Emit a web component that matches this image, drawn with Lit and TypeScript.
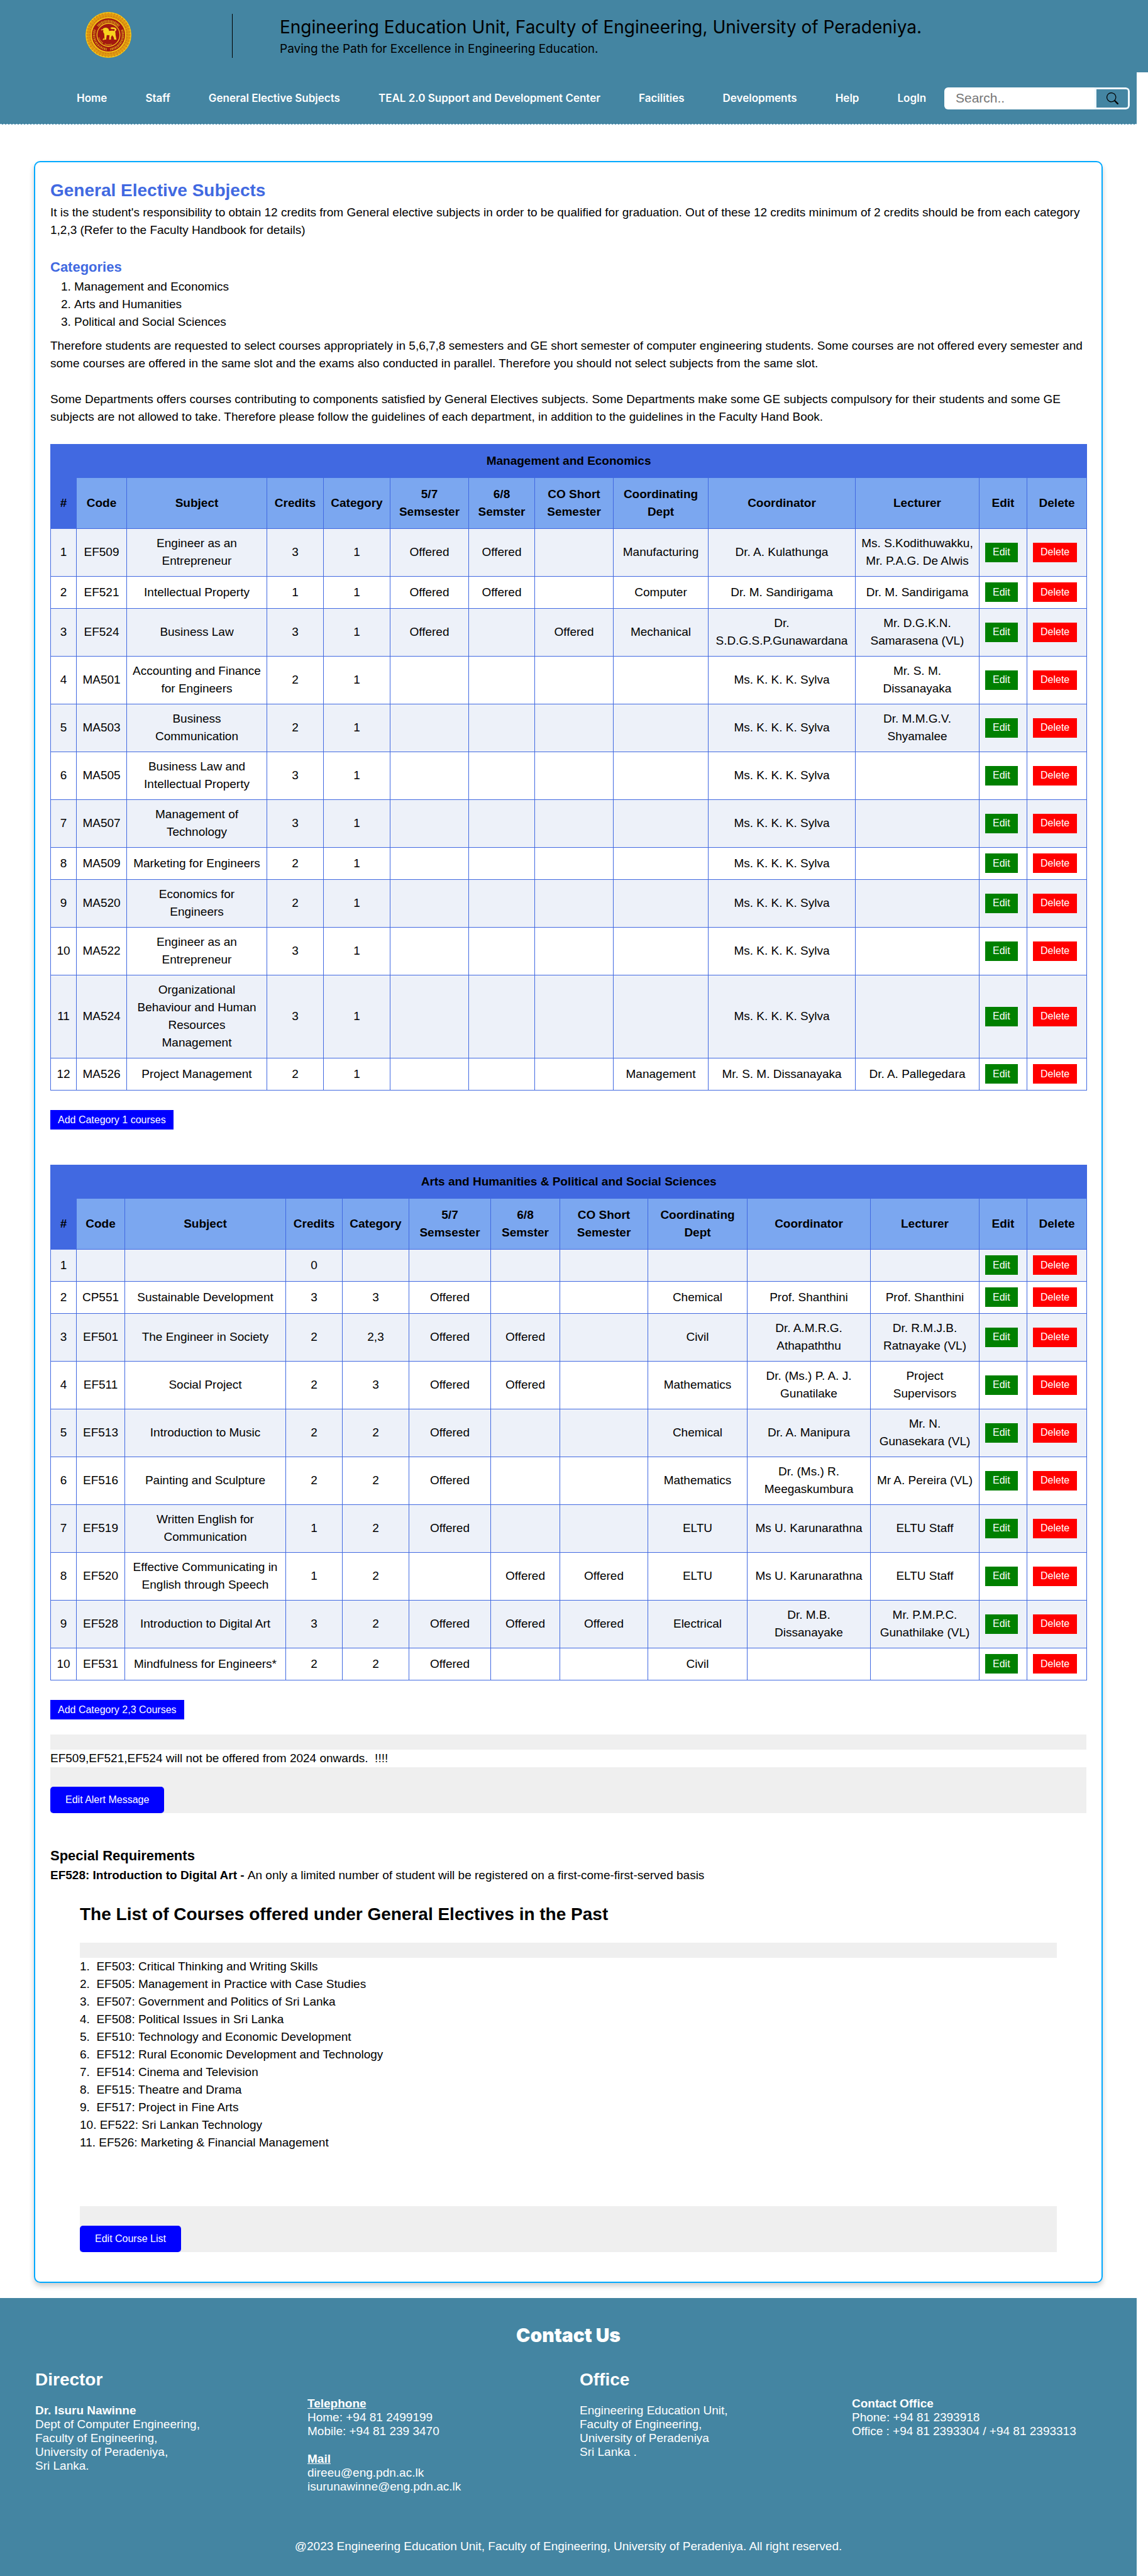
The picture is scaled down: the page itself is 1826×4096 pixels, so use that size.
import { LitElement, html, css, svg, nothing } from "lit";
import { customElement, property } from "lit/decorators.js";

type Course = [
  code: string,
  subject: string,
  credits: string,
  category: string,
  odd: string,
  even: string,
  short: string,
  dept: string,
  coordinator: string,
  lecturer: string,
];

const O = "Offered";
const SYLVA = "Ms. K. K. K. Sylva";

const CATEGORY_1: Course[] = [
  ["EF509", "Engineer as an Entrepreneur", "3", "1", O, O, "", "Manufacturing", "Dr. A. Kulathunga", "Ms. S.Kodithuwakku, Mr. P.A.G. De Alwis"],
  ["EF521", "Intellectual Property", "1", "1", O, O, "", "Computer", "Dr. M. Sandirigama", "Dr. M. Sandirigama"],
  ["EF524", "Business Law", "3", "1", O, "", O, "Mechanical", "Dr. S.D.G.S.P.Gunawardana", "Mr. D.G.K.N. Samarasena (VL)"],
  ["MA501", "Accounting and Finance for Engineers", "2", "1", "", "", "", "", SYLVA, "Mr. S. M. Dissanayaka"],
  ["MA503", "Business Communication", "2", "1", "", "", "", "", SYLVA, "Dr. M.M.G.V. Shyamalee"],
  ["MA505", "Business Law and Intellectual Property", "3", "1", "", "", "", "", SYLVA, ""],
  ["MA507", "Management of Technology", "3", "1", "", "", "", "", SYLVA, ""],
  ["MA509", "Marketing for Engineers", "2", "1", "", "", "", "", SYLVA, ""],
  ["MA520", "Economics for Engineers", "2", "1", "", "", "", "", SYLVA, ""],
  ["MA522", "Engineer as an Entrepreneur", "3", "1", "", "", "", "", SYLVA, ""],
  ["MA524", "Organizational Behaviour and Human Resources Management", "3", "1", "", "", "", "", SYLVA, ""],
  ["MA526", "Project Management", "2", "1", "", "", "", "Management", "Mr. S. M. Dissanayaka", "Dr. A. Pallegedara"],
];

const CATEGORY_2_3: Course[] = [
  ["", "", "0", "", "", "", "", "", "", ""],
  ["CP551", "Sustainable Development", "3", "3", O, "", "", "Chemical", "Prof. Shanthini", "Prof. Shanthini"],
  ["EF501", "The Engineer in Society", "2", "2,3", O, O, "", "Civil", "Dr. A.M.R.G. Athapaththu", "Dr. R.M.J.B. Ratnayake (VL)"],
  ["EF511", "Social Project", "2", "3", O, O, "", "Mathematics", "Dr. (Ms.) P. A. J. Gunatilake", "Project Supervisors"],
  ["EF513", "Introduction to Music", "2", "2", O, "", "", "Chemical", "Dr. A. Manipura", "Mr. N. Gunasekara (VL)"],
  ["EF516", "Painting and Sculpture", "2", "2", O, "", "", "Mathematics", "Dr. (Ms.) R. Meegaskumbura", "Mr A. Pereira (VL)"],
  ["EF519", "Written English for Communication", "1", "2", O, "", "", "ELTU", "Ms U. Karunarathna", "ELTU Staff"],
  ["EF520", "Effective Communicating in English through Speech", "1", "2", "", O, O, "ELTU", "Ms U. Karunarathna", "ELTU Staff"],
  ["EF528", "Introduction to Digital Art", "3", "2", O, O, O, "Electrical", "Dr. M.B. Dissanayake", "Mr. P.M.P.C. Gunathilake (VL)"],
  ["EF531", "Mindfulness for Engineers*", "2", "2", O, "", "", "Civil", "", ""],
];

const HEADINGS = [
  "#", "Code", "Subject", "Credits", "Category", "5/7 Semsester", "6/8 Semster",
  "CO Short Semester", "Coordinating Dept", "Coordinator", "Lecturer", "Edit", "Delete",
];

const PAST_COURSES = [
  "1.\u00a0 EF503: Critical Thinking and Writing Skills",
  "2.\u00a0 EF505: Management in Practice with Case Studies",
  "3.\u00a0 EF507: Government and Politics of Sri Lanka",
  "4.\u00a0 EF508: Political Issues in Sri Lanka",
  "5.\u00a0 EF510: Technology and Economic Development",
  "6.\u00a0 EF512: Rural Economic Development and Technology",
  "7.\u00a0 EF514: Cinema and Television",
  "8.\u00a0 EF515: Theatre and Drama",
  "9.\u00a0 EF517: Project in Fine Arts",
  "10. EF522: Sri Lankan Technology",
  "11. EF526: Marketing & Financial Management",
];

const NAV = [
  "Home", "Staff", "General Elective Subjects", "TEAL 2.0 Support and Development Center",
  "Facilities", "Developments", "Help", "LogIn",
];

@customElement("university-crest")
export class UniversityCrest extends LitElement {
  static styles = css`
    :host { display: block; width: 73px; height: 73px; }
    svg { display: block; width: 100%; height: 100%; }
  `;

  render() {
    const petals = Array.from({ length: 44 }, (_, i) => svg`
      <ellipse cx="50" cy="6" rx="1.5" ry="4" fill="none" stroke="#c8700e" stroke-width="1"
        transform="rotate(${(i * 360) / 44} 50 50)"></ellipse>`);
    return html`
      <svg viewBox="0 0 100 100" role="img" aria-label="University of Peradeniya crest">
        <circle cx="50" cy="50" r="50" fill="#e9a913"></circle>
        <circle cx="50" cy="50" r="48.6" fill="none" stroke="#f6d21c" stroke-width="1.4"></circle>
        ${petals}
        <circle cx="50" cy="50" r="40" fill="none" stroke="#c8700e" stroke-width="2" stroke-dasharray="1.6 1.8"></circle>
        <circle cx="50" cy="50" r="37" fill="#a3180f" stroke="#f6d21c" stroke-width="1.6"></circle>
        <path d="M27 31a30 30 0 0 1 46 0" fill="none" stroke="#d08a17" stroke-width="6" stroke-dasharray="2 1.1 3 1"></path>
        <path d="M20.500 39a31.500 31.500 0 0 0 26 42.300" fill="none" stroke="#d08a17" stroke-width="5" stroke-dasharray="2 1.500 3 1.300"></path>
        <path d="M79.500 39a31.500 31.500 0 0 1 -26 42.300" fill="none" stroke="#d08a17" stroke-width="5" stroke-dasharray="3 1.200 2 1"></path>
        <circle cx="50" cy="50" r="25" fill="#a3180f" stroke="#f3c81c" stroke-width="1.800"></circle>
        <path d="M29 56q3 9 9 12M42 70q8 3 16 0" fill="none" stroke="#d08a17" stroke-width="3" stroke-dasharray="2 1.200"></path>
        <path fill="#f8d31e" d="M37 39c1-4 5-5 9-4.500 4 .5 5 4 5.500 7 3-.6 7-1 10 0 3-1 3-3.500.5-4.500l-5 .2-3-2.200 3-1.800 6 .8c5 1 6 6 1.500 8.800 1.500 4 .5 7 1.500 10l1.500 7.500h-4l-2.500-6-3-3.500-2.500 4.500v5h-4l.8-9.500-6-.5-1.300 10h-5.500l2-2.200-.8-11c-2.500-2-2.500-5-1.700-7.600l-4.500.6-.8-1.500 3-.8-2-1.300z"></path>
        <path fill="#f8d31e" d="M40 56l-3 5h4zM63 54l4 6h-5z"></path>
      </svg>`;
  }
}

@customElement("course-table")
export class CourseTable extends LitElement {
  @property() heading = "";
  @property({ attribute: false }) rows: Course[] = [];
  @property({ attribute: false }) widths: number[] = [];

  static styles = css`
    :host { display: block; }
    table {
      width: 100%;
      table-layout: fixed;
      border-collapse: collapse;
      font: 19px/28px "Liberation Sans", Arial, sans-serif;
      color: #000;
      text-align: center;
    }
    th, td { border: 1px solid #4169e1; vertical-align: middle; }
    th { background: #7ba7f0; padding: 12px 8px; font-weight: bold; }
    .title, .index { background: #4169e1; }
    .index { padding: 12px 2px; }
    td { padding: 9px 8px 10px; }
    .number { padding: 9px 2px 10px; }
    tbody tr:nth-child(odd) { background: #edf1f9; }
    .action { padding: 9px 8px 10px 9px; }
    button {
      display: block;
      height: 31px;
      border: 0;
      padding: 0 12px;
      color: #fff;
      font: 16px "Liberation Sans", Arial, sans-serif;
      cursor: pointer;
    }
    .edit { background: #008000; }
    .delete { background: #ff0000; }
  `;

  render() {
    return html`
      <table>
        <colgroup>
          ${this.widths.map((w) => html`<col style="width:${w}px">`)}
        </colgroup>
        <thead>
          <tr><th class="title" colspan="13">${this.heading}</th></tr>
          <tr>
            ${HEADINGS.map((h, i) => html`<th scope="col" class=${i === 0 ? "index" : nothing}>${h}</th>`)}
          </tr>
        </thead>
        <tbody>
          ${this.rows.map((row, i) => html`
            <tr>
              <td class="number">${i + 1}</td>
              ${row.map((value) => html`<td>${value}</td>`)}
              <td class="action"><button class="edit" type="button">Edit</button></td>
              <td class="action"><button class="delete" type="button">Delete</button></td>
            </tr>`)}
        </tbody>
      </table>`;
  }
}

@customElement("app-root")
export class AppRoot extends LitElement {
  static styles = css`
    :host {
      display: block;
      background: #fff;
      color: #000;
      font: 19px/28px "Liberation Sans", Arial, sans-serif;
    }
    h1, h2, h3, p, ol, ul { margin: 0; padding: 0; }
    h2 { font-size: 28px; line-height: 42px; }
    h3 { font-size: 22px; line-height: 34px; }
    button { border: 0; color: #fff; font: 16px "Liberation Sans", Arial, sans-serif; cursor: pointer; }

    .banner {
      display: flex;
      align-items: flex-start;
      box-sizing: border-box;
      height: 115px;
      padding: 19px 20px 0 136px;
      background: #4485a2;
      font-family: Inter, sans-serif;
    }
    .divider { width: 1px; height: 70px; margin: 3px 75px 0 160px; background: #000; }
    .banner-title { padding-top: 5px; }
    .banner h1 { font-size: 28px; line-height: 38px; font-weight: 400; }
    .banner p { font-size: 19px; line-height: 32px; font-weight: 400; }

    .page { margin-right: 18px; }
    .nav {
      display: flex;
      align-items: center;
      justify-content: space-between;
      height: 82px;
      padding: 0 11px 0 122px;
      background: #4485a2;
      border-bottom: 1px dashed #d4eaf7;
    }
    .nav ul { display: flex; gap: 61px; list-style: none; }
    .nav a {
      color: #fff;
      text-decoration: none;
      font: 600 17px/28px Inter, sans-serif;
      white-space: nowrap;
    }
    .search { display: flex; height: 35px; border-radius: 6px; overflow: hidden; }
    .search input {
      box-sizing: border-box;
      width: 239px;
      border: 0;
      padding: 0 18px;
      background: #fff;
      font: 21px "Liberation Sans", Arial, sans-serif;
    }
    .search input::placeholder { color: #757575; }
    .search button {
      display: flex;
      align-items: center;
      justify-content: center;
      width: 56px;
      padding: 0;
      border: 3px solid #f0f8ff;
      border-radius: 0 6px 6px 0;
      background: #4485a2;
      color: #000;
    }
    .search svg { width: 19px; height: 19px; }

    .card {
      margin: 58px 54px 24px;
      padding: 24px 24px 47px;
      border: 2px solid #00a9ff;
      border-radius: 10px;
      box-shadow: 0 5px 9px rgba(0, 0, 0, 0.2);
    }
    .blue { color: #4169e1; }
    .categories-title { margin-top: 28px; }
    .categories { margin-bottom: 10px; padding-left: 38px; }
    .gap { margin-top: 29px; }
    course-table { margin-top: 29px; }
    .add { display: block; height: 31px; margin: 31px 0 0; padding: 0 12px; background: #0000ff; }
    .second { margin-top: 56px; }
    .panel { background: #efefef; padding-top: 24px; }
    .alert { margin-top: 24px; }
    .panel-text { background: #fff; }
    .panel button {
      display: block;
      height: 42px;
      margin-top: 31px;
      padding: 0 24px;
      border-radius: 5px;
      background: #0000ff;
    }
    .special { margin-top: 51px; }
    .past { padding: 27px 47px 0; }
    .past h2 { margin-bottom: 24px; }
    .past .panel-text { padding-bottom: 87px; list-style: none; }

    footer {
      padding: 43px 20px 36px 56px;
      background: #4485a2;
      color: #fff;
      line-height: 22px;
    }
    .contact { margin-right: -20px; margin-left: -56px; font: 900 30px/32px Inter, sans-serif; text-align: center; }
    .columns {
      display: grid;
      grid-template-columns: repeat(4, 1fr);
      margin-top: 39px;
      min-height: 270px;
    }
    .columns h2 { margin-bottom: 22px; line-height: 32px; }
    .side { padding-top: 43px; }
    .under { text-decoration: underline; }
    .mail { margin-top: 22px; }
    .copyright { margin-right: -20px; margin-left: -56px; text-align: center; }
  `;

  render() {
    return html`
      <header class="banner">
        <university-crest></university-crest>
        <div class="divider"></div>
        <div class="banner-title">
          <h1>Engineering Education Unit, Faculty of Engineering, University of Peradeniya.</h1>
          <p>Paving the Path for Excellence in Engineering Education.</p>
        </div>
      </header>
      <div class="page">
        <nav class="nav">
          <ul>${NAV.map((n) => html`<li><a href="#">${n}</a></li>`)}</ul>
          <form class="search" role="search">
            <input type="text" aria-label="Search" placeholder="Search..">
            <button type="button" aria-label="Submit search">
              <svg viewBox="0 0 16 16" fill="currentColor">
                <path d="M11.742 10.344a6.500 6.500 0 1 0-1.397 1.398h-.001c.03.04.062.078.098.115l3.850 3.850a1 1 0 0 0 1.415-1.414l-3.850-3.850a1.007 1.007 0 0 0-.115-.1zM12 6.500a5.500 5.500 0 1 1-11 0 5.500 5.500 0 0 1 11 0"></path>
              </svg>
            </button>
          </form>
        </nav>

        <main class="card">
          <h2 class="blue">General Elective Subjects</h2>
          <p>It is the student's responsibility to obtain 12 credits from General elective subjects in order to be qualified for graduation. Out of these 12 credits minimum of 2 credits should be from each category 1,2,3 (Refer to the Faculty Handbook for details)</p>
          <h3 class="blue categories-title">Categories</h3>
          <ol class="categories">
            <li>Management and Economics</li>
            <li>Arts and Humanities</li>
            <li>Political and Social Sciences</li>
          </ol>
          <p>Therefore students are requested to select courses appropriately in 5,6,7,8 semesters and GE short semester of computer engineering students. Some courses are not offered every semester and some courses are offered in the same slot and the exams also conducted in parallel. Therefore you should not select subjects from the same slot.</p>
          <p class="gap">Some Departments offers courses contributing to components satisfied by General Electives subjects. Some Departments make some GE subjects compulsory for their students and some GE subjects are not allowed to take. Therefore please follow the guidelines of each department, in addition to the guidelines in the Faculty Hand Book.</p>

          <course-table
            heading="Management and Economics"
            .rows=${CATEGORY_1}
            .widths=${[41, 80, 223, 90, 106, 125, 105, 125, 151, 234, 197, 76, 95]}
          ></course-table>
          <button class="add" type="button">Add Category 1 courses</button>

          <course-table
            class="second"
            heading="Arts and Humanities &amp; Political and Social Sciences"
            .rows=${CATEGORY_2_3}
            .widths=${[41, 77, 256, 90, 106, 130, 110, 140, 158, 196, 173, 76, 95]}
          ></course-table>
          <button class="add" type="button">Add Category 2,3 Courses</button>

          <section class="panel alert">
            <p class="panel-text">EF509,EF521,EF524 will not be offered from 2024 onwards.&nbsp; !!!!</p>
            <button type="button">Edit Alert Message</button>
          </section>

          <h3 class="special">Special Requirements</h3>
          <p><b>EF528: Introduction to Digital Art - </b>An only a limited number of student will be registered on a first-come-first-served basis</p>

          <section class="past">
            <h2>The List of Courses offered under General Electives in the Past</h2>
            <div class="panel">
              <ul class="panel-text">${PAST_COURSES.map((c) => html`<li>${c}</li>`)}</ul>
              <button type="button">Edit Course List</button>
            </div>
          </section>
        </main>

        <footer>
          <h2 class="contact">Contact Us</h2>
          <div class="columns">
            <div>
              <h2>Director</h2>
              <p><b>Dr. Isuru Nawinne</b><br>Dept of Computer Engineering,<br>Faculty of Engineering,<br>University of Peradeniya,<br>Sri Lanka.</p>
            </div>
            <div class="side">
              <p><b class="under">Telephone</b><br>Home: +94 81 2499199<br>Mobile: +94 81 239 3470</p>
              <p class="mail"><b class="under">Mail</b><br>direeu@eng.pdn.ac.lk<br>isurunawinne@eng.pdn.ac.lk</p>
            </div>
            <div>
              <h2>Office</h2>
              <p>Engineering Education Unit,<br>Faculty of Engineering,<br>University of Peradeniya<br>Sri Lanka .</p>
            </div>
            <div class="side">
              <p><b>Contact Office</b><br>Phone: +94 81 2393918<br>Office : +94 81 2393304 / +94 81 2393313</p>
            </div>
          </div>
          <p class="copyright">@2023 Engineering Education Unit, Faculty of Engineering, University of Peradeniya. All right reserved.</p>
        </footer>
      </div>
    `;
  }
}
